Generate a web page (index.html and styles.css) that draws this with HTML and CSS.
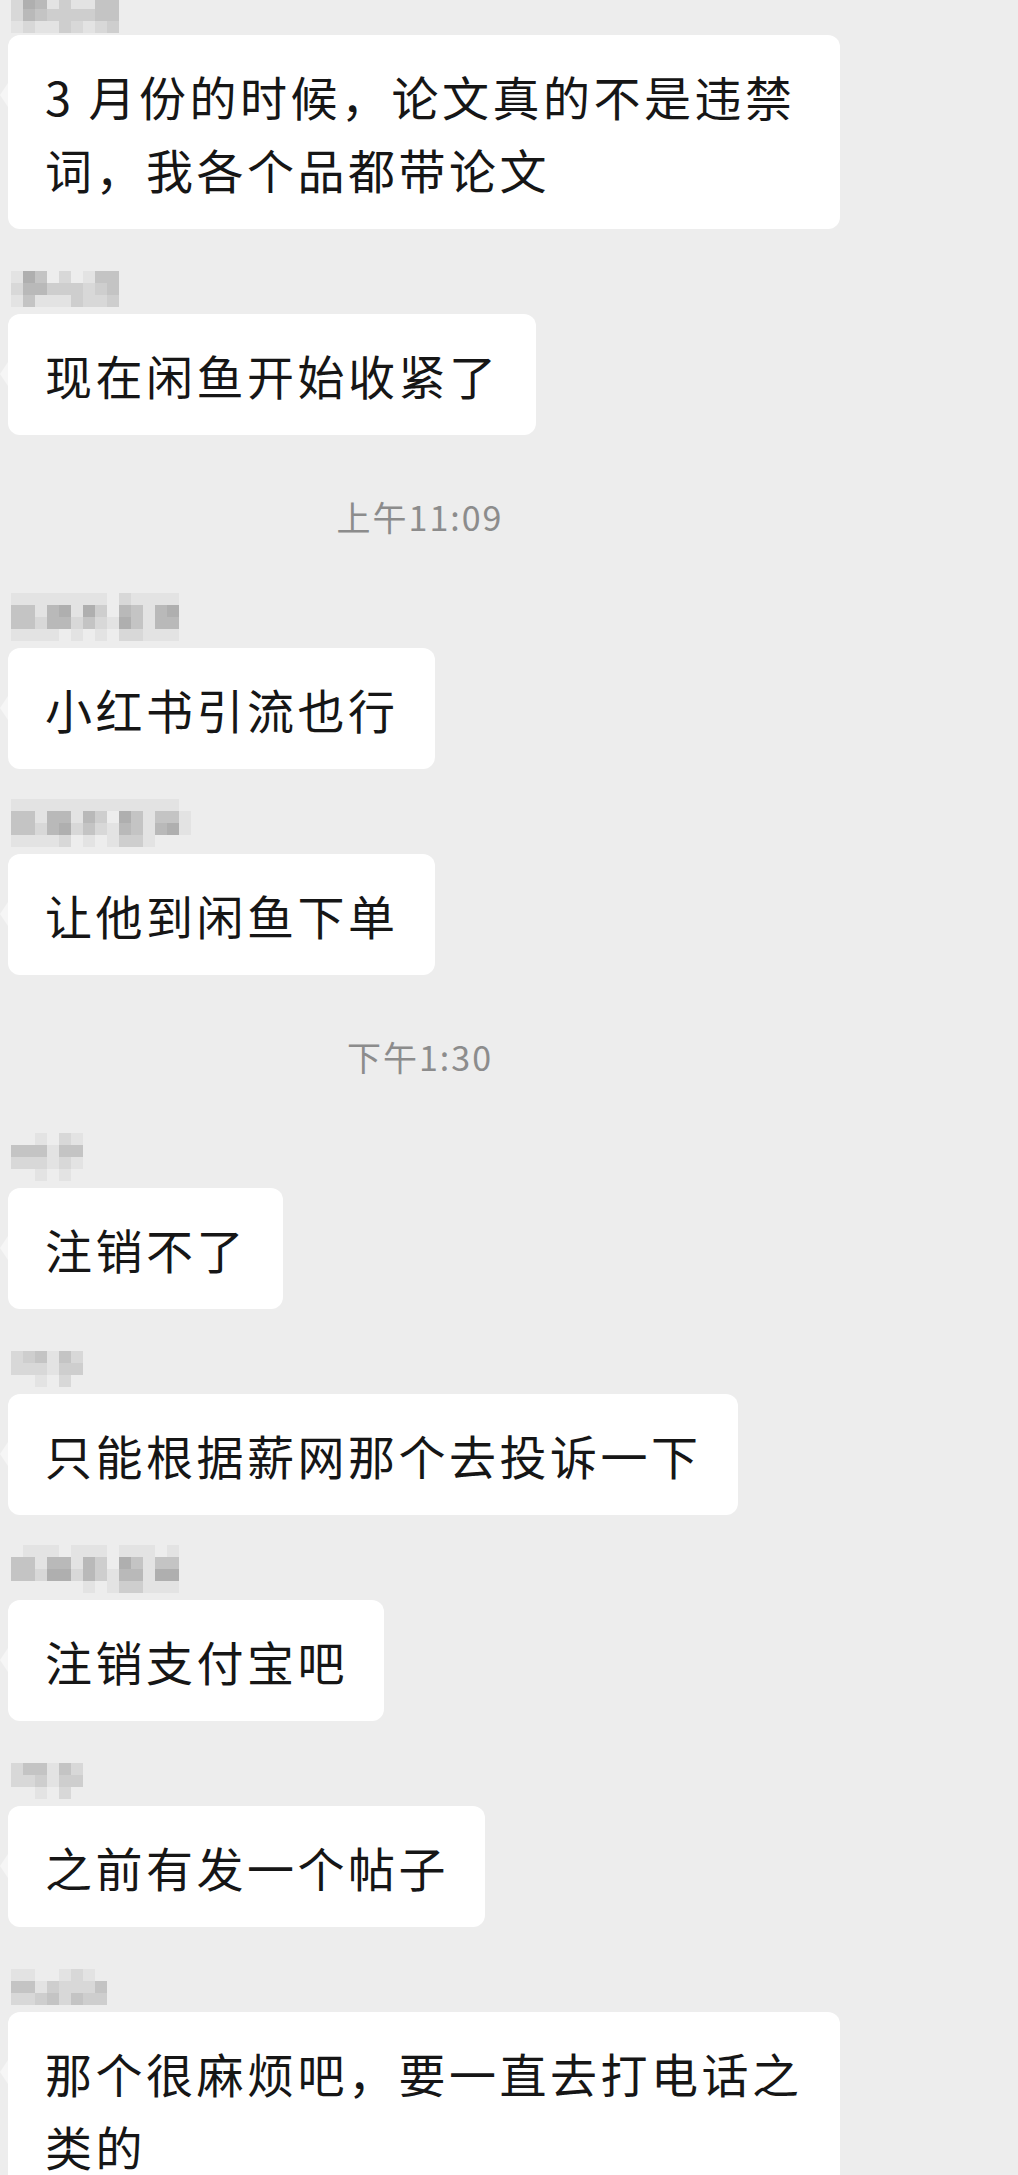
FILE: index.html
```html
<!DOCTYPE html>
<html lang="zh-CN">
<head>
    <meta charset="UTF-8">
    <meta name="viewport" content="width=device-width, initial-scale=1.0">
    <title>群聊</title>
    <link rel="stylesheet" href="styles.css">
</head>
<body>
    <div class="chat">
        <div class="msg first">
            <div class="nick" data-cells="000000000/265131144/254333344/121132123"></div>
            <div class="bubble">3 月份的时候，论文真的不是违禁词，我各个品都带论文</div>
        </div>
        <div class="msg">
            <div class="nick" data-cells="000000000/164020144/255333234/141113223"></div>
            <div class="bubble">现在闲鱼开始收紧了</div>
        </div>

        <div class="time">上午11:09</div>

        <div class="msg">
            <div class="nick" data-cells="111111110211110/441561630541560/442552421641550/111101010221110"></div>
            <div class="bubble">小红书引流也行</div>
        </div>
        <div class="msg">
            <div class="nick" data-cells="111111111111110/441551530641441/442562421541561/111120101331000"></div>
            <div class="bubble">让他到闲鱼下单</div>
        </div>

        <div class="time">下午1:30</div>

        <div class="msg">
            <div class="nick" data-cells="001021/444144/222121/001010"></div>
            <div class="bubble">注销不了</div>
        </div>
        <div class="msg">
            <div class="nick" data-cells="000000/234142/222133/001020"></div>
            <div class="bubble">只能根据薪网那个去投诉一下</div>
        </div>
        <div class="msg">
            <div class="nick" data-cells="011101110111010/441551530641440/442662531551660/000000101331110"></div>
            <div class="bubble">注销支付宝吧</div>
        </div>
        <div class="msg">
            <div class="nick" data-cells="000000/244142/223133/001020"></div>
            <div class="bubble">之前有发一个帖子</div>
        </div>
        <div class="msg">
            <div class="nick" data-cells="00000000/11001210/44132224/22342433"></div>
            <div class="bubble">那个很麻烦吧，要一直去打电话之类的</div>
        </div>
    </div>

    <script>
        // 昵称打码：按 data-cells 生成马赛克色块
        document.querySelectorAll(".nick").forEach(function (nick) {
            nick.dataset.cells.split("/").forEach(function (line) {
                const row = document.createElement("div");
                row.className = "mosaic-row";
                for (const c of line) {
                    const cell = document.createElement("span");
                    cell.className = "px s" + c;
                    row.appendChild(cell);
                }
                nick.appendChild(row);
            });
        });
    </script>
</body>
</html>
```

FILE: styles.css
```css
html, body {
    margin: 0;
    padding: 0;
    overflow: hidden;
    background: #ededed;
}

body {
    font-family: "Noto Sans CJK SC", "Noto Sans", sans-serif;
    color: #161616;
}

.chat {
    width: 840px;
}

.msg {
    display: flex;
    flex-direction: column;
    align-items: flex-start;
}

.nick {
    height: 48px;
    margin: 30px 0 7px 11px;
}

.msg.first .nick {
    margin-top: -15px;
    margin-bottom: 2px;
}

.mosaic-row {
    display: flex;
    height: 12px;
}

.px {
    width: 12px;
    height: 12px;
}

.s0 { background: #ededed; }
.s1 { background: #e3e3e3; }
.s2 { background: #d8d8d8; }
.s3 { background: #cecece; }
.s4 { background: #c4c4c4; }
.s5 { background: #b9b9b9; }
.s6 { background: #afafaf; }

.bubble {
    position: relative;
    box-sizing: border-box;
    max-width: 832px;
    margin-left: 8px;
    padding: 24px 36px 24px 37px;
    background: #fff;
    border-radius: 12px;
    font-size: 47px;
    line-height: 73px;
    letter-spacing: 3.5px;
}

/* 气泡左侧小尖角 */
.bubble::before {
    content: "";
    position: absolute;
    left: -8px;
    top: 48px;
    border-top: 12px solid transparent;
    border-bottom: 12px solid transparent;
    border-right: 8px solid #f6f6f6;
}

.time {
    margin: 64px 0 28px;
    height: 36px;
    line-height: 36px;
    text-align: center;
    font-size: 34px;
    letter-spacing: 2px;
    color: #8c8c8c;
}
```
